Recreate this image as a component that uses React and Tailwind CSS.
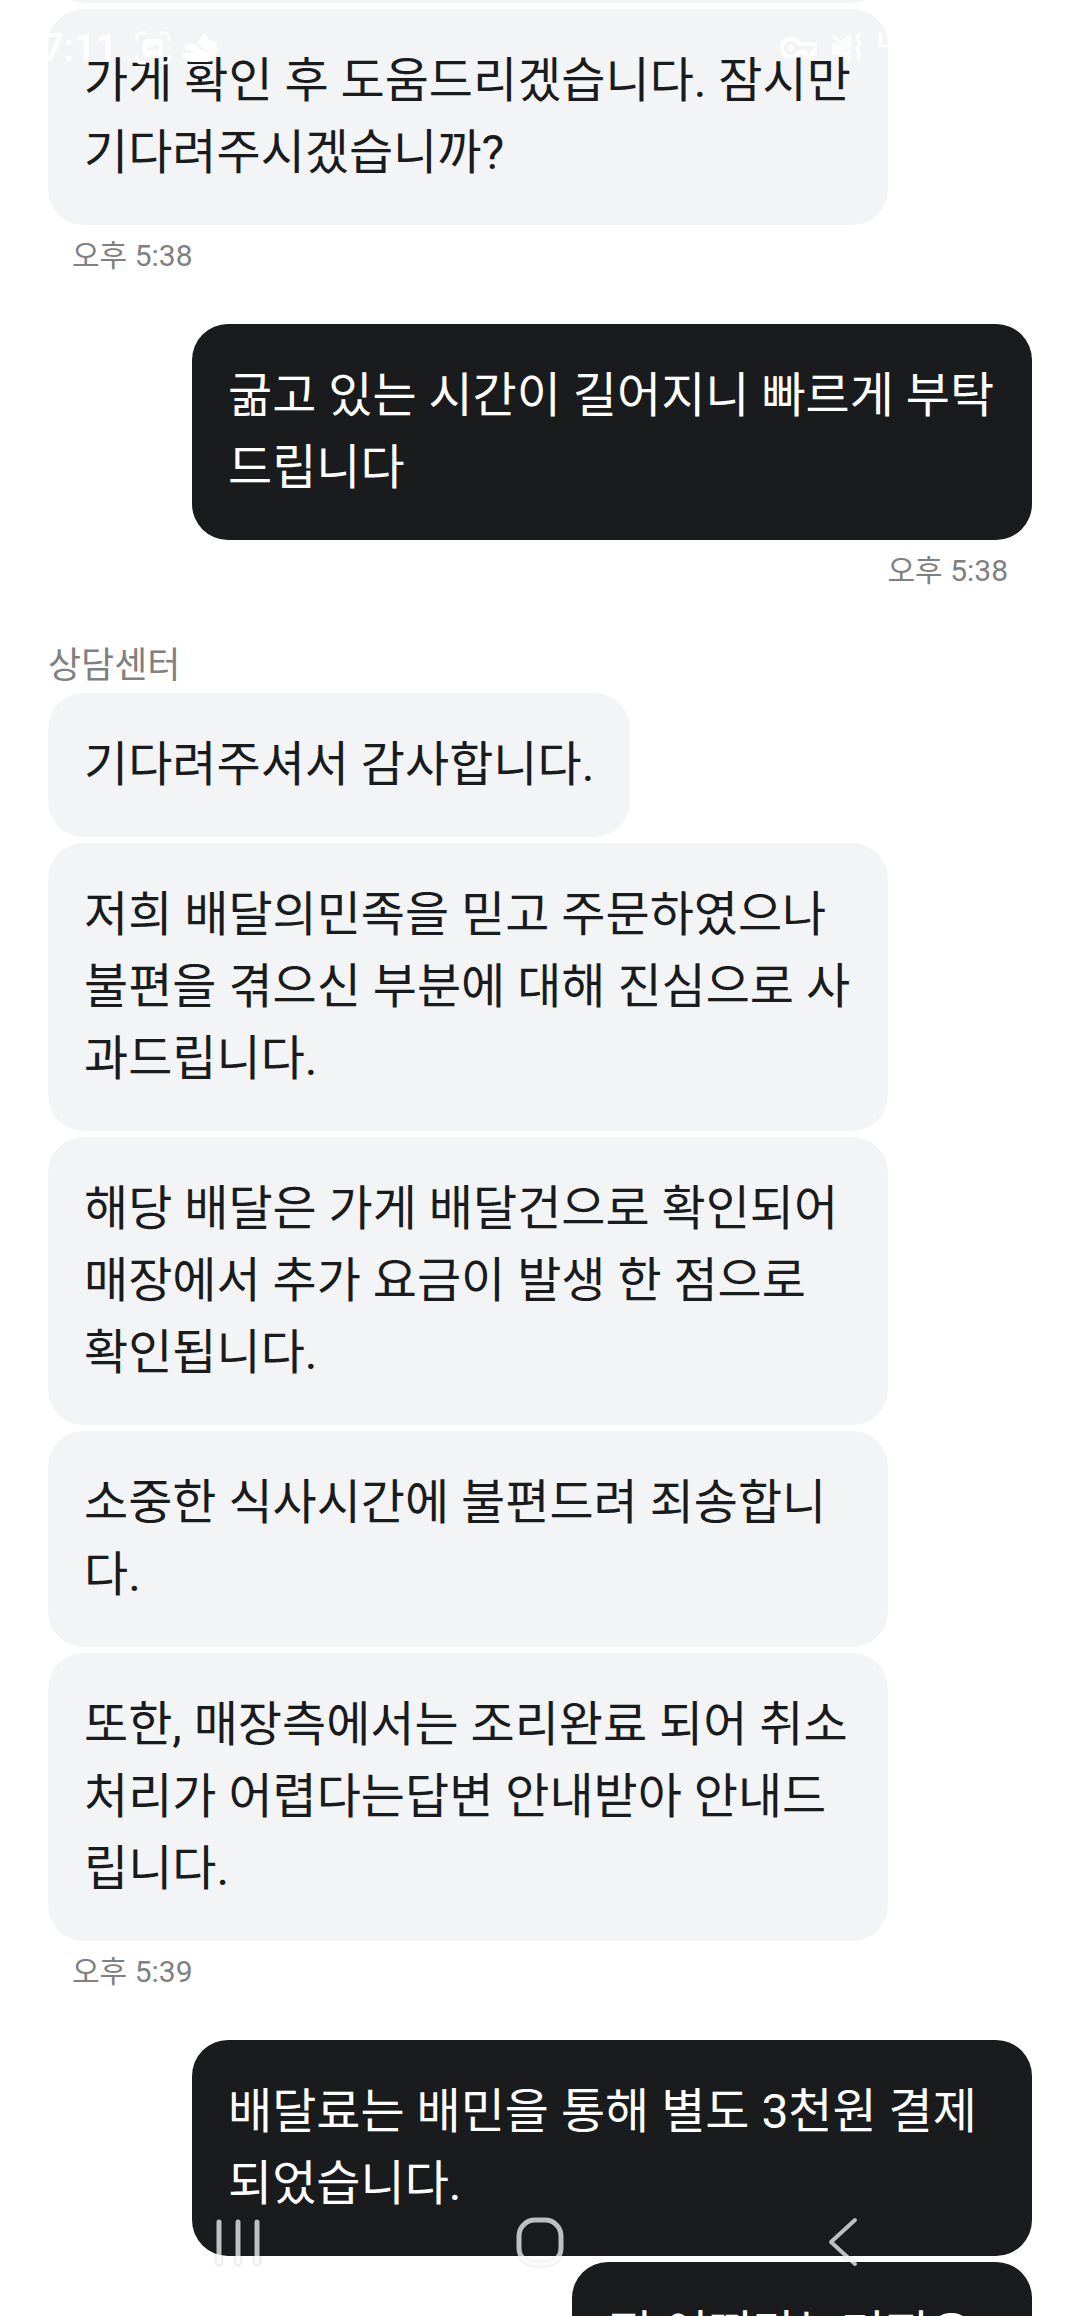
import React from 'react';

const groups = [
  {
    mine: false,
    time: '오후 5:38',
    messages: ['가게 확인 후 도움드리겠습니다. 잠시만 기다려주시겠습니까?'],
  },
  {
    mine: true,
    time: '오후 5:38',
    messages: ['굶고 있는 시간이 길어지니 빠르게 부탁드립니다'],
  },
  {
    mine: false,
    sender: '상담센터',
    time: '오후 5:39',
    messages: [
      '기다려주셔서 감사합니다.',
      '저희 배달의민족을 믿고 주문하였으나 불편을 겪으신 부분에 대해 진심으로 사과드립니다.',
      '해당 배달은 가게 배달건으로 확인되어 매장에서 추가 요금이 발생 한 점으로 확인됩니다.',
      '소중한 식사시간에 불편드려 죄송합니다.',
      '또한, 매장측에서는 조리완료 되어 취소처리가 어렵다는답변 안내받아 안내드립니다.',
    ],
  },
  {
    mine: true,
    messages: [
      '배달료는 배민을 통해 별도 3천원 결제되었습니다.',
      '전 어쩌라는거지요?',
    ],
  },
];

function Bubble({ mine, children }) {
  return (
    <p
      className={
        mine
          ? 'max-w-[840px] rounded-[36px] bg-[#1a1b1c] p-9 text-[48px] leading-[72px] text-white'
          : 'max-w-[840px] rounded-[36px] bg-[#f3f4f6] p-9 text-[48px] leading-[72px] text-[#1a1b1c]'
      }
    >
      {children}
    </p>
  );
}

function MessageGroup({ group }) {
  return (
    <section className={group.mine ? 'flex flex-col items-end' : 'flex flex-col items-start'}>
      {group.sender && (
        <h2 className="text-[36px] leading-[54px] text-[#808080]">{group.sender}</h2>
      )}
      <div className={group.mine ? 'flex flex-col items-end gap-1.5' : 'flex flex-col items-start gap-1.5'}>
        {group.messages.map((text, index) => (
          <Bubble key={index} mine={group.mine}>{text}</Bubble>
        ))}
      </div>
      {group.time && (
        <time className="mt-2 px-6 text-[30px] leading-[45px] text-[#808080]">{group.time}</time>
      )}
    </section>
  );
}

function StatusBar() {
  return (
    <div className="pointer-events-none absolute inset-x-0 top-0 flex items-center justify-between pt-6 pr-48 pl-[42px] text-white">
      <div className="flex h-12 items-center">
        <span className="text-[38px] leading-[48px] font-semibold">7:11</span>
        {/* Chụp màn hình */}
        <svg width="36" height="34" viewBox="0 0 36 34" fill="none" className="ml-[18px]">
          <path
            d="M2 10V6a4 4 0 0 1 4-4h5M25 2h5a4 4 0 0 1 4 4v4M34 24v4a4 4 0 0 1-4 4h-5M11 32H6a4 4 0 0 1-4-4v-4"
            stroke="currentColor"
            strokeWidth="3"
          />
          <path
            fillRule="evenodd"
            d="M12 8h12a4 4 0 0 1 4 4v10a4 4 0 0 1-4 4H12a4 4 0 0 1-4-4V12a4 4 0 0 1 4-4zm0 11h12v-5l-3-1-4 4-2-2-3 2z"
            fill="currentColor"
          />
        </svg>
        <svg width="36" height="32" viewBox="0 0 36 32" fill="currentColor" className="ml-[11px]">
          <path d="M15 11L21 2q1-2 3 0l3 6 5 1q1 0 2 2l2 8q-1 2-3 1-9 1-13-5z" />
          <path d="M3 17q-1-3 4-5 6-1 9 3 5 7 19 6-1 9-10 9H9q-8 0-9-9h13q-3-3-7-3-3 0-3-1z" />
        </svg>
      </div>
      <div className="flex h-12 items-center">
        <svg width="38" height="24" viewBox="0 0 38 24" fill="none" stroke="currentColor">
          <path
            d="M20 8h16v8h-3v5h-7v-5h-6a9 9 0 1 1 0-8z"
            strokeWidth="4"
            strokeLinejoin="round"
          />
          <circle cx="12" cy="12" r="3" fill="currentColor" stroke="none" />
        </svg>
        {/* Im lặng + rung */}
        <svg width="32" height="30" viewBox="0 0 32 30" fill="none" className="ml-[14px]">
          <path d="M11 8L20 0v16zM1 10h5l14 13v7l-9-8H4q-3 0-3-3z" fill="currentColor" />
          <path d="M2 2l18 18" stroke="currentColor" strokeWidth="3" />
          <path
            d="M30 1q-6 3-3 6t1 5-1 5 1 5-1 7"
            stroke="currentColor"
            strokeWidth="3"
          />
        </svg>
        <span className="ml-[14px] self-start pt-1 text-[20px] leading-[24px] font-bold">L</span>
      </div>
    </div>
  );
}

function NavigationBar() {
  return (
    <nav className="absolute inset-x-0 bottom-12 flex justify-center gap-[254px]">
      <button type="button" aria-label="최근 앱">
        <svg width="48" height="52" viewBox="0 0 48 52" fill="none" strokeLinecap="round">
          <path d="M5 6v40M24 6v40M43 6v40" stroke="#000" strokeOpacity="0.07" strokeWidth="9" />
          <path d="M5 6v40M24 6v40M43 6v40" stroke="#fff" strokeOpacity="0.72" strokeWidth="5" />
        </svg>
      </button>
      <button type="button" aria-label="홈">
        <svg width="48" height="52" viewBox="0 0 48 52" fill="none">
          <rect x="3" y="4" width="42" height="44" rx="16" stroke="#000" strokeOpacity="0.07" strokeWidth="7" />
          <rect x="3" y="4" width="42" height="44" rx="16" stroke="#fff" strokeOpacity="0.72" strokeWidth="5" />
        </svg>
      </button>
      <button type="button" aria-label="뒤로">
        <svg width="48" height="52" viewBox="0 0 48 52" fill="none" strokeLinecap="round" strokeLinejoin="round">
          <path d="M37 4L13 26l24 22" stroke="#000" strokeOpacity="0.07" strokeWidth="7" />
          <path d="M37 4L13 26l24 22" stroke="#fff" strokeOpacity="0.72" strokeWidth="4" />
        </svg>
      </button>
    </nav>
  );
}

export default function App() {
  return (
    <div className="relative h-screen overflow-hidden bg-white font-['Roboto','Noto_Sans_CJK_KR',sans-serif]">
      <main className="px-12">
        {/* đuôi của tin nhắn trước, đã cuộn lên trên */}
        <div className="-mt-18 mb-1.5 h-[75px] max-w-[840px] rounded-[36px] bg-[#f3f4f6]" />
        <div className="flex flex-col gap-[46px]">
          {groups.map((group, index) => (
            <MessageGroup key={index} group={group} />
          ))}
        </div>
      </main>
      <StatusBar />
      <NavigationBar />
    </div>
  );
}
